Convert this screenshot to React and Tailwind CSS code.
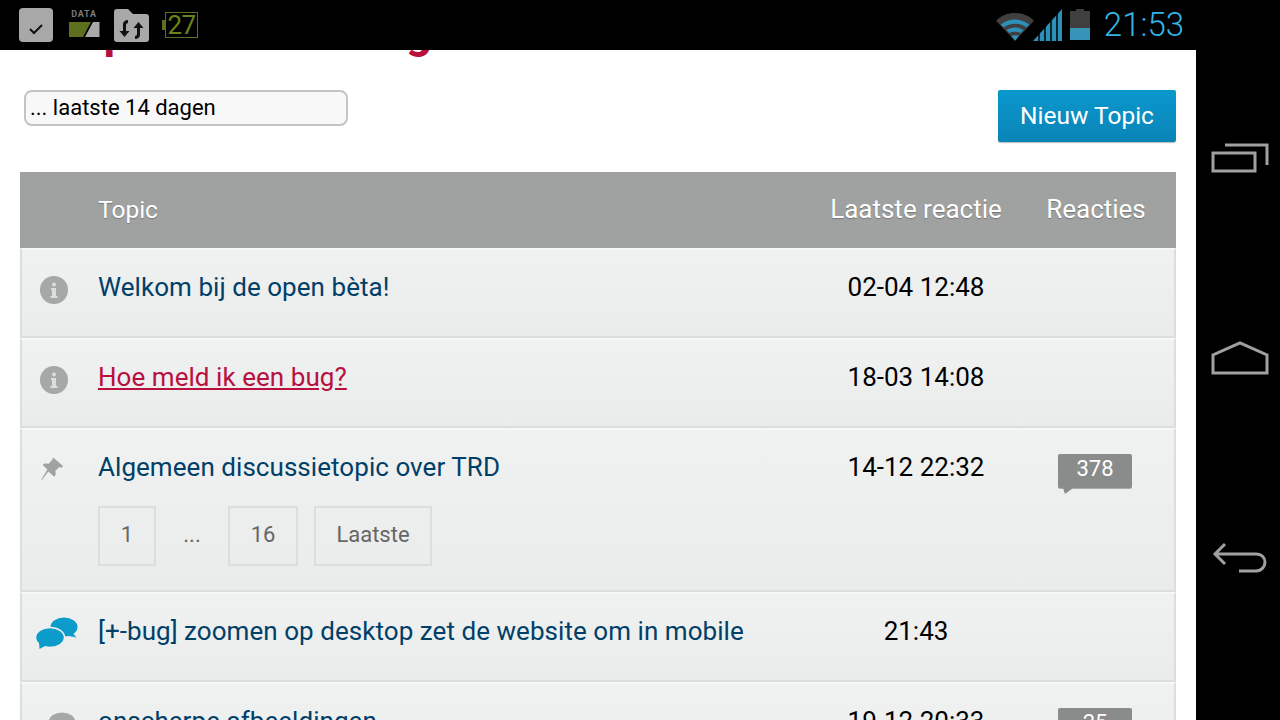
const topics = [
  { icon: 'info', title: 'Welkom bij de open bèta!', last: '02-04 12:48' },
  { icon: 'info', title: 'Hoe meld ik een bug?', last: '18-03 14:08', active: true },
  { icon: 'pin', title: 'Algemeen discussietopic over TRD', last: '14-12 22:32', count: 378, pages: ['1', '...', '16', 'Laatste'] },
  { icon: 'chat', title: '[+-bug] zoomen op desktop zet de website om in mobile', last: '21:43' },
  { icon: 'chatGray', title: 'onscherpe afbeeldingen', last: '19-12 20:33', count: 25 },
]

const pageWidths = { 1: 'w-[58px]', 16: 'w-[70px]', Laatste: 'w-[118px]' }

function InfoIcon() {
  return (
    <svg width="28" height="28" viewBox="0 0 28 28" className="ml-[18px] mt-[4px]">
      <circle cx="14" cy="14" r="14" fill="#a6a7a7" />
      <circle cx="14" cy="8.5" r="2" fill="#dcdddd" />
      <path d="M11 12h5v8h1.500v2h-7v-2H12v-6h-1z" fill="#dcdddd" />
    </svg>
  )
}

function PinIcon() {
  return (
    <svg width="26" height="26" viewBox="0 0 26 28" className="ml-[17px] mt-[5px]">
      <path d="M15 1l10 9-2 1.500-2-.8-4.500 4.500c1 2.500.5 4.500-1 6L9 15.500 2 25l-.5-.5L8 13.500 3 8.500c1.500-1.500 4-2 6-1l4.500-4.500-.3-1.500z" fill="#a0a1a1" />
    </svg>
  )
}

function ChatIcon({ color, className }) {
  return (
    <svg width="42" height="32" viewBox="0 0 42 32" className={className}>
      <ellipse cx="28" cy="10" rx="13.500" ry="9.500" fill={color} />
      <path d="M35 14l5.500 6.500-10-2z" fill={color} />
      <ellipse cx="14" cy="20.500" rx="14.500" ry="10" fill={color} stroke="#eff0f0" strokeWidth="1.500" />
      <path d="M3 25l.5 7 7.500-4z" fill={color} />
    </svg>
  )
}

function TopicIcon({ type }) {
  if (type === 'info') return <InfoIcon />
  if (type === 'pin') return <PinIcon />
  if (type === 'chat') return <ChatIcon color="#0b9ccb" className="ml-[14px] mt-[1px]" />
  return <ChatIcon color="#a6a7a7" className="ml-[12px] mt-[6px]" />
}

function Badge({ value }) {
  return (
    <div className="relative w-[74px] h-[34px] mt-[2px] bg-[#8a8c8b] rounded-[2px] shadow-[0_1px_0_#aaa] text-white text-[22px] leading-[29px] text-center">
      {value}
      <svg className="absolute left-[5px] top-[34px]" width="10" height="6" viewBox="0 0 10 6">
        <path d="M0 0h10L2 6z" fill="#8a8c8b" />
      </svg>
    </div>
  )
}

function TopicRow({ topic }) {
  return (
    <div className="grid grid-cols-[76px_1fr_200px_158px] min-h-[90px] border-2 border-l-[#dcdddd] border-r-[#dcdddd] border-t-[#f6f7f7] border-b-[#dcdddd] bg-gradient-to-b from-[#f0f1f1] to-[#eaebeb] pt-[22px] pb-[34px] has-[nav]:pb-[24px]">
      <div className="h-[30px]">
        <TopicIcon type={topic.icon} />
      </div>
      <div>
        <a className={topic.active ? 'block text-[26px] leading-[30px] tracking-[0.05px] text-[#b8103f] underline' : 'block text-[26px] leading-[30px] tracking-[0.05px] text-[#004068]'}>
          {topic.title}
        </a>
        {topic.pages && (
          <nav className="flex gap-4 mt-6 text-[22px] text-[#666]">
            {topic.pages.map((p) =>
              p === '...' ? (
                <span key={p} className="w-[40px] h-[60px] pb-[3px] flex items-center justify-center">{p}</span>
              ) : (
                <span key={p} className={`${pageWidths[p]} h-[60px] pb-[3px] flex items-center justify-center border-2 border-[#dcdddd]`}>{p}</span>
              )
            )}
          </nav>
        )}
      </div>
      <div className="text-[26px] leading-[30px] text-center text-black">{topic.last}</div>
      <div className="flex justify-center">
        {topic.count && <Badge value={topic.count} />}
      </div>
    </div>
  )
}

function StatusBar() {
  return (
    <div className="h-[50px] shrink-0 bg-black flex items-center justify-between pl-[19px] pr-[96px]">
      <div className="flex items-center">
        <div className="w-[34px] h-[34px] rounded-[4px] bg-[#a8a8a8] flex items-center justify-center">
          <svg width="16" height="12" viewBox="0 0 16 12" className="mt-[8px]">
            <path d="M2 6l4 4 8-8" fill="none" stroke="#111" strokeWidth="2" />
          </svg>
        </div>
        <div className="ml-[15px] w-[32px] mt-[-5px] flex flex-col items-center">
          <span className="text-[9px] leading-[10px] font-bold tracking-[0.8px] text-[#7a7a7a]">DATA</span>
          <svg width="31" height="15" viewBox="0 0 31 15" className="mt-[3px]">
            <path d="M0 0h22l-8 15H0z" fill="#5d701f" />
            <path d="M24 0h6.500v15H16z" fill="#a8a8a8" />
          </svg>
        </div>
        <svg width="35" height="33" viewBox="0 0 35 33" className="ml-[14px]">
          <path d="M3 0h11l5 5h13c2 0 3 1 3 3v22c0 2-1 3-3 3H3c-2 0-3-1-3-3V3c0-2 1-3 3-3z" fill="#a8a8a8" />
          <path d="M9 15v7H5.500l5 6 5-6H12v-6c0-1 1-2 2-2v-3c-3 0-5 2-5 4zM26 26v-7h3.500l-5-6-5 6H23v6c0 1-1 2-2 2v3c3 0 5-2 5-4z" fill="#111" />
        </svg>
        <div className="ml-[16px] relative w-[33px] h-[26px] border border-[#5d701f] text-[#6a8418] text-[26px] leading-[24px] tracking-[-0.5px] text-center">
          27
          <div className="absolute -left-[4px] top-[7px] w-[3px] h-[10px] bg-[#5d701f]" />
        </div>
      </div>
      <div className="flex items-center">
        <svg width="38" height="31" viewBox="0 0 40 32">
          <path d="M0 11C10 0 30 0 40 11l-20 21z" fill="#3f3f3f" />
          <path d="M5 15c9-7 21-7 30 0l-3 3c-7-5-17-5-24 0z" fill="#2d90b8" />
          <path d="M11 21c5-4 13-4 18 0l-3 3c-3-2-9-2-12 0z" fill="#2d90b8" />
          <path d="M16 27c2-1 6-1 8 0l-4 5z" fill="#2d90b8" />
        </svg>
        <svg width="29" height="32" viewBox="0 0 29 32" className="ml-[-1px]">
          <path d="M0 32L29 0v32z" fill="#2d90b8" />
          <path d="M6 32V20M12 32V14M18 32V8M24 32V2" stroke="#000" strokeWidth="1.500" />
        </svg>
        <div className="ml-[8px] w-[20px] h-[31px] relative mt-[-1px]">
          <div className="absolute left-[6px] top-0 w-[8px] h-[2px] bg-[#3f3f3f]" />
          <div className="absolute left-0 right-0 top-[2px] bottom-0 bg-[#3f3f3f]" />
          <div className="absolute left-0 right-0 bottom-0 h-[12px] bg-[#3793b8]" />
        </div>
        <span className="ml-[14px] text-[33px] leading-[50px] font-light text-[#33b5e5]">21:53</span>
      </div>
    </div>
  )
}

function SideNav() {
  return (
    <div className="w-[84px] shrink-0 bg-black flex flex-col pt-[8px]">
      <div className="h-[200px] flex items-center justify-center pl-[4px]">
        <svg width="58" height="30" viewBox="0 0 58 30" fill="none" stroke="#a0a0a0" strokeWidth="3">
          <rect x="2" y="10" width="42" height="18" />
          <path d="M14 2h42v20" />
        </svg>
      </div>
      <div className="h-[200px] flex items-center justify-center pl-[4px]">
        <svg width="58" height="34" viewBox="0 0 58 34" fill="none" stroke="#a0a0a0" strokeWidth="3">
          <path d="M2 32V14L29 2l27 12v18z" />
        </svg>
      </div>
      <div className="h-[200px] flex items-center justify-center pl-[4px]">
        <svg width="56" height="32" viewBox="0 0 56 32" fill="none" stroke="#a0a0a0" strokeWidth="3">
          <path d="M13 2L3 12l10 10M3 12h41c6 0 9 4 9 8s-3 9-9 9H27" />
        </svg>
      </div>
    </div>
  )
}

export default function App() {
  return (
    <div className="w-[1280px] h-[720px] overflow-hidden flex flex-col bg-black font-['Roboto',sans-serif]">
      <StatusBar />
      <div className="flex flex-1 min-h-0">
        <main className="flex-1 min-w-0 bg-white overflow-hidden">
          <div className="h-[8px] overflow-hidden pl-[34px]">
            <h1 className="mt-[-43px] text-[46px] leading-[50px] font-bold text-[#b8103f] whitespace-nowrap">Help en de melding</h1>
          </div>
          <div className="flex justify-between items-start pt-[32px] pl-[24px] pr-[20px]">
            <div className="w-[324px] h-[36px] rounded-[8px] border-2 border-[#c4c4c4] bg-[#f8f8f8] pl-[4px] text-[22px] leading-[32px] text-black">
              ... laatste 14 dagen
            </div>
            <button className="w-[178px] h-[52px] rounded-[2px] bg-gradient-to-b from-[#0a98cd] to-[#0a84b7] shadow-[0_1px_1px_#bbb] text-white text-[24.5px]">
              Nieuw Topic
            </button>
          </div>
          <div className="mx-[20px] mt-[30px] w-[1156px]">
            <div className="grid grid-cols-[78px_1fr_200px_160px] h-[76px] items-center bg-[#a0a2a1] text-white text-[26px] [text-shadow:0_1px_1px_#777]">
              <div />
              <div className="text-[24.5px]">Topic</div>
              <div className="text-center mt-[-2px]">Laatste reactie</div>
              <div className="text-center mt-[-2px]">Reacties</div>
            </div>
            {topics.map((t) => (
              <TopicRow key={t.title} topic={t} />
            ))}
          </div>
        </main>
        <SideNav />
      </div>
    </div>
  )
}
